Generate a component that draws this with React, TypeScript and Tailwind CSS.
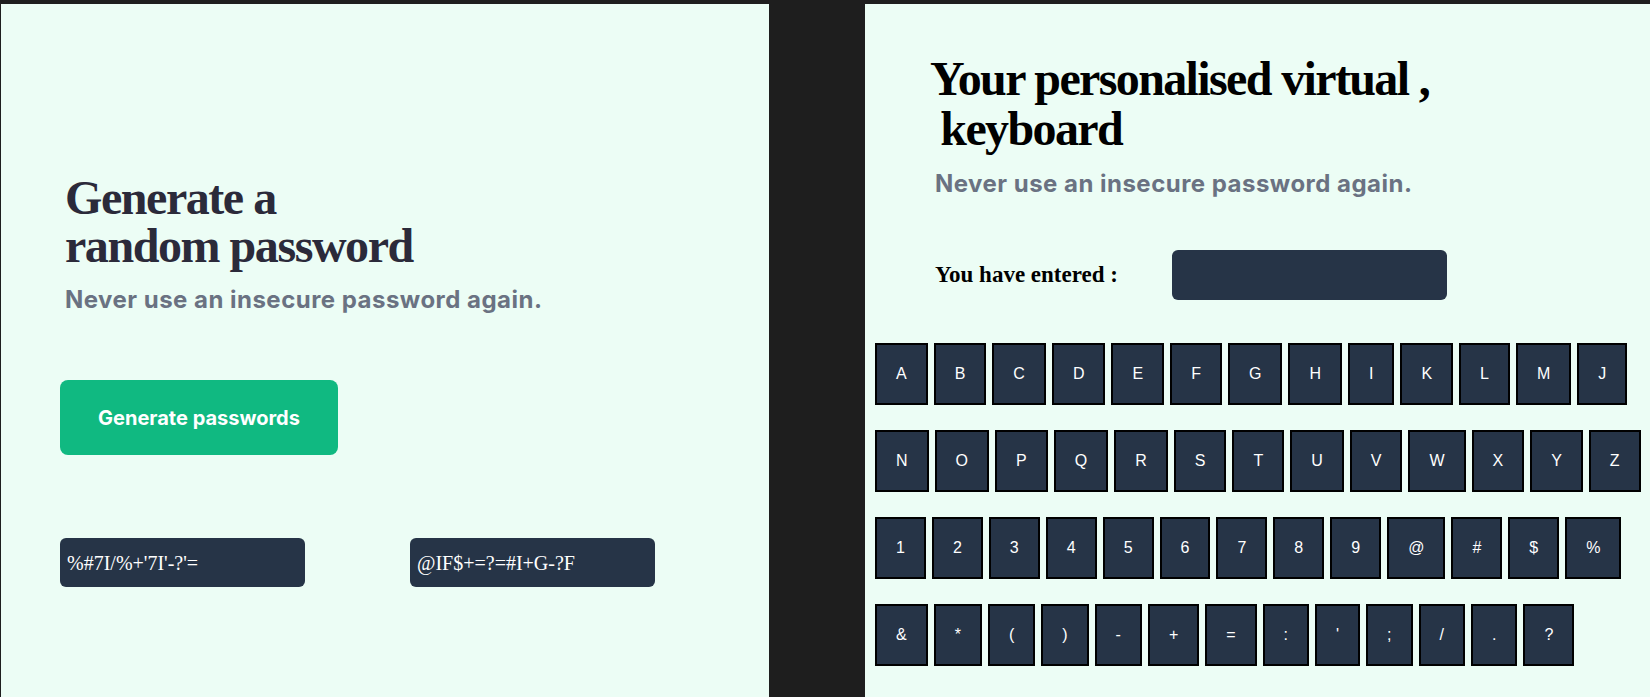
import React from "react";

const rows: string[][] = [
  ["A", "B", "C", "D", "E", "F", "G", "H", "I", "K", "L", "M", "J"],
  ["N", "O", "P", "Q", "R", "S", "T", "U", "V", "W", "X", "Y", "Z"],
  ["1", "2", "3", "4", "5", "6", "7", "8", "9", "@", "#", "$", "%"],
  ["&", "*", "(", ")", "-", "+", "=", ":", "'", ";", "/", ".", "?"],
];

const passwords = ["%#7I/%+'7I'-?'=", "@IF$+=?=#I+G-?F"];

const Key = ({ label }: { label: string }) => (
  <button className="border-2 border-black bg-[#263447] px-[19px] py-[19px] font-['Liberation_Sans',Arial,sans-serif] text-base leading-[20px] text-white">
    {label}
  </button>
);

const App = () => {
  return (
    <div className="flex min-h-screen gap-[96px] bg-[#1e1e1e] pl-[1px] pt-[4px]">
      {/* password generator */}
      <section className="h-[693px] w-[768px] bg-[#ecfdf5] pl-[59px] pt-[170px]">
        <div className="pl-[5px]">
          <h1 className="font-['Liberation_Serif',serif] text-5xl leading-none font-bold tracking-[-0.03em] text-[#2b2a3a]">
            Generate a
            <br />
            random password
          </h1>
          <p className="mt-[14px] font-['Inter',sans-serif] text-2xl font-bold tracking-[0.02em] text-gray-500">
            Never use an insecure password again.
          </p>
        </div>

        <button className="mt-[64px] h-[75px] w-[278px] rounded-lg bg-[#10b981] font-['Inter',sans-serif] text-xl font-bold text-white">
          Generate passwords
        </button>

        <div className="mt-[83px] flex gap-[105px]">
          {passwords.map((pw) => (
            <div
              key={pw}
              className="flex h-[49px] w-[245px] items-center rounded-md bg-[#263447] px-[7px] font-['Liberation_Serif',serif] text-xl text-white">
              {pw}
            </div>
          ))}
        </div>
      </section>

      {/* virtual keyboard */}
      <section className="flex-1 bg-[#ecfdf5] pl-[10px] pt-[50px]">
        <div className="pl-[55px]">
          <h1 className="font-['Liberation_Serif',serif] text-5xl leading-[50px] font-bold tracking-[-0.034em] text-black">
            Your personalised virtual ,
            <br />
            &nbsp;keyboard
          </h1>
          <p className="mt-[14px] pl-[5px] font-['Inter',sans-serif] text-2xl font-bold tracking-[0.02em] text-gray-500">
            Never use an insecure password again.
          </p>
          <div className="mt-[50px] flex items-start pl-[5px]">
            <span className="mt-[8px] w-[237px] font-['Liberation_Serif',serif] text-[23px] font-bold text-black">
              You have entered :
            </span>
            <div className="h-[50px] w-[275px] rounded-md bg-[#263447]" />
          </div>
        </div>

        <div className="mt-[43px] flex flex-col gap-[25px]">
          {rows.map((row, i) => (
            <div key={i} className="flex gap-[6px]">
              {row.map((k) => (
                <Key key={k} label={k} />
              ))}
            </div>
          ))}
        </div>
      </section>
    </div>
  );
};

export default App;
